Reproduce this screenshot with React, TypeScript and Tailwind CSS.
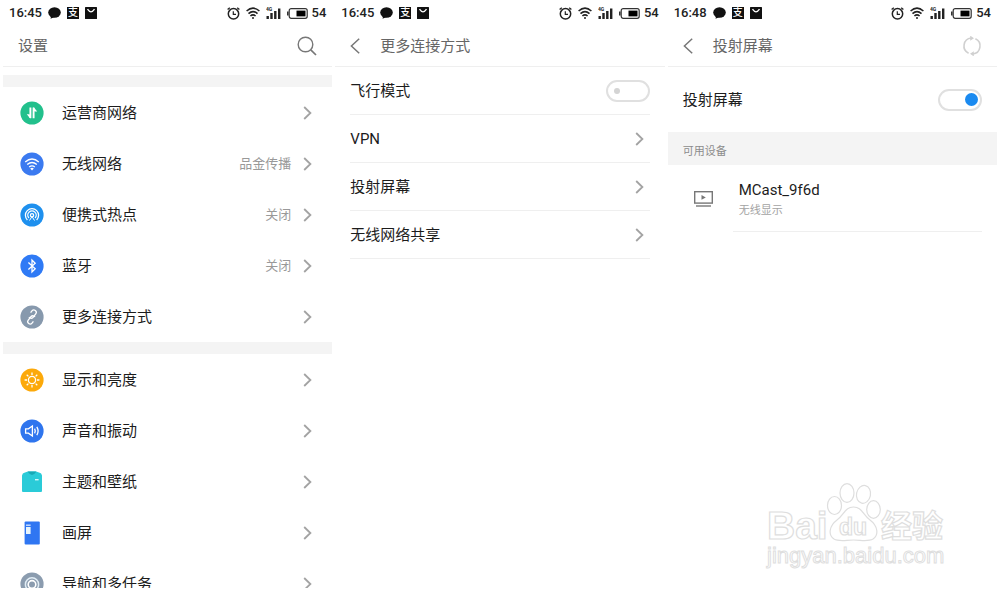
import { useState, type ReactNode } from "react";

function ChatIcon() {
  return (
    <svg width="13" height="12" viewBox="0 0 13 12" aria-hidden="true">
      <ellipse cx="6.5" cy="5.5" rx="6.3" ry="5.2" fill="#111" />
      <path d="M3 9 L2.6 11.8 L6.5 10 Z" fill="#111" />
    </svg>
  );
}

function BagIcon() {
  return (
    <svg width="12" height="12" viewBox="0 0 12 12" aria-hidden="true">
      <rect width="12" height="12" rx="0.5" fill="#111" />
      <path d="M2.5 2.2 Q6 7.4 9.5 2.2" fill="none" stroke="#fff" strokeWidth="1.3" />
    </svg>
  );
}

function AlarmIcon() {
  return (
    <svg width="13" height="13" viewBox="0 0 13 13" fill="none" stroke="#222" aria-hidden="true">
      <circle cx="6.5" cy="6.8" r="5.2" strokeWidth="1.5" />
      <path d="M6.3 4.2 V7.4 H9" strokeWidth="1.2" />
      <path d="M0.6 2.6 L2.8 0.7 M12.4 2.6 L10.2 0.7" strokeWidth="1.3" />
    </svg>
  );
}

function StatusWifiIcon() {
  return (
    <svg width="14" height="12" viewBox="0 0 14 12" fill="none" stroke="#222" strokeWidth="1.6" aria-hidden="true">
      <path d="M0.6 4 Q7 -1.6 13.4 4" />
      <path d="M2.5 6.6 Q7 2.6 11.5 6.6" />
      <path d="M4.4 9 Q7 6.8 9.6 9" />
      <circle cx="7" cy="10.9" r="1" fill="#222" stroke="none" />
    </svg>
  );
}

function SignalIcon() {
  return (
    <svg width="15" height="12" viewBox="0 0 15 12" fill="#222" aria-hidden="true">
      <text x="0" y="4" fontSize="5" fontWeight="700" fontFamily="Roboto, sans-serif">
        4G
      </text>
      <rect x="0.5" y="9" width="2.4" height="3" />
      <rect x="4.3" y="6" width="2.4" height="6" />
      <rect x="8.1" y="4" width="2.4" height="8" />
      <rect x="12" y="1.5" width="2.4" height="10.5" />
    </svg>
  );
}

function BatteryIcon() {
  return (
    <svg width="21" height="11" viewBox="0 0 21 11" aria-hidden="true">
      <rect x="2.2" y="0.7" width="18" height="9.6" rx="2" fill="none" stroke="#333" strokeWidth="1.2" />
      <rect x="0" y="3.5" width="1.6" height="4" fill="#333" />
      <rect x="9.5" y="2.6" width="9" height="5.8" fill="#000" />
    </svg>
  );
}

function Chevron() {
  return (
    <svg className="shrink-0" width="9" height="14" viewBox="0 0 9 14" fill="none" stroke="#a3a3a3" strokeWidth="1.8" aria-hidden="true">
      <path d="M1.2 1 L7.4 7 L1.2 13" />
    </svg>
  );
}

function SearchIcon() {
  return (
    <svg width="20" height="20" viewBox="0 0 20 20" fill="none" stroke="#777" strokeWidth="1.4" aria-hidden="true">
      <circle cx="8.5" cy="8.5" r="7.3" />
      <path d="M13.8 13.8 L19 19" strokeWidth="1.7" />
    </svg>
  );
}

function BackIcon() {
  return (
    <svg width="10" height="16" viewBox="0 0 10 16" fill="none" stroke="#777" strokeWidth="1.5" aria-hidden="true">
      <path d="M9.2 0.7 L1.4 8 L9.2 15.3" />
    </svg>
  );
}

function RefreshIcon() {
  return (
    <svg width="20" height="20" viewBox="0 0 20 20" fill="none" stroke="#d0d0d0" strokeWidth="1.6" aria-hidden="true">
      <path d="M6.6 17.2 A8 8 0 0 1 9.2 2" />
      <path d="M13.4 2.8 A8 8 0 0 1 10.8 18" />
      <path d="M8.2 -0.4 L12 2.2 L8.2 4.8 Z M11.8 15.200 L8 17.800 L11.800 20.400 Z" fill="#d0d0d0" stroke="none" />
    </svg>
  );
}

function CastIcon() {
  return (
    <svg width="19" height="16" viewBox="0 0 19 16" fill="none" stroke="#777" strokeWidth="1.4" aria-hidden="true">
      <rect x="0.7" y="0.7" width="17.6" height="11.4" />
      <path d="M7.5 4 L11.8 6.4 L7.5 8.8 Z" fill="#777" stroke="none" />
      <path d="M2 15 H17" />
    </svg>
  );
}

function Disc({ fill, children }: { fill: string; children: ReactNode }) {
  return (
    <svg width="24" height="24" viewBox="0 0 24 24" fill="none" stroke="#fff" strokeWidth="1.3" aria-hidden="true">
      <circle cx="12" cy="12" r="11.6" fill={fill} stroke="none" />
      {children}
    </svg>
  );
}

const icons = {
  network: (
    <Disc fill="#22c08c">
      <path d="M10.4 6.5 V17 M13.6 17.2 V6.8" strokeWidth="1.9" />
      <path d="M11.3 17.2 H10 L6.8 13.2 H9.6 Z M12.7 6.6 H14 L17.2 10.6 H14.4 Z" fill="#fff" stroke="none" />
    </Disc>
  ),
  wifi: (
    <Disc fill="#3b7af0">
      <path d="M5.2 10 Q12 4 18.8 10" />
      <path d="M7.2 12.6 Q12 8.4 16.8 12.6" />
      <path d="M9.2 15 Q12 12.6 14.8 15" />
      <path d="M10.2 16.4 Q12 15 13.8 16.4 L12 18.4 Z" fill="#fff" stroke="none" />
    </Disc>
  ),
  hotspot: (
    <Disc fill="#1e90ee">
      <path d="M7.4 17 A6.6 6.6 0 1 1 16.6 17" />
      <path d="M8.9 15 A4.2 4.2 0 1 1 15.1 15" />
      <circle cx="12" cy="12.2" r="1.6" />
      <path d="M12 13.5 L9.5 17.5 M12 13.5 L14.5 17.5" strokeWidth="1" />
    </Disc>
  ),
  bluetooth: (
    <Disc fill="#2f7af5">
      <path d="M8.4 8.6 L15.2 14.8 L12 18 V6 L15.2 9.2 L8.4 15.4" />
    </Disc>
  ),
  more: (
    <Disc fill="#8799ad">
      <g transform="rotate(-52 12 12)">
        <path d="M13.6 9.6 H15.8 A2.4 2.4 0 0 1 15.8 14.4 H11.2 A2.4 2.4 0 0 1 9.2 11" transform="translate(1 -1.4)" />
        <path d="M10.4 14.4 H8.2 A2.4 2.4 0 0 1 8.2 9.6 H12.8 A2.4 2.4 0 0 1 14.8 13" transform="translate(-1 1.4)" />
      </g>
    </Disc>
  ),
  display: (
    <Disc fill="#fca90a">
      <circle cx="12" cy="12" r="3.6" />
      <path d="M12 4.6 V7 M12 17 V19.4 M4.6 12 H7 M17 12 H19.4 M6.7 6.7 L8.4 8.4 M15.6 15.6 L17.3 17.3 M6.7 17.3 L8.4 15.6 M15.6 8.4 L17.3 6.7" />
    </Disc>
  ),
  sound: (
    <Disc fill="#2f75ee">
      <path d="M5.6 9.8 H8.4 L12.4 7 V17 L8.4 14.2 H5.6 Z" />
      <path d="M14.6 9.6 Q16 12 14.6 14.4 M16.8 7.8 Q19.4 12 16.8 16.2" />
    </Disc>
  ),
  theme: (
    <svg width="24" height="24" viewBox="0 0 24 24" aria-hidden="true">
      <path d="M2 5.5 Q2.2 3 5 2.4 L8 1.6 H16 L19 2.4 Q21.8 3 22 5.5 V21 Q22 22 21 22 H3 Q2 22 2 21 Z" fill="#2acbd8" />
      <path d="M7.6 1.6 H16.4 Q12 8.4 7.6 1.6 Z" fill="#16a9b6" />
      <rect x="15" y="9" width="3.6" height="1.4" fill="#d5f8fa" />
    </svg>
  ),
  screen: (
    <svg width="24" height="24" viewBox="0 0 24 24" aria-hidden="true">
      <rect x="4.6" y="0.6" width="15.2" height="22.8" rx="1" fill="#2f76f2" />
      <path d="M6 4.2 H10.6" stroke="#cfe0ff" strokeWidth="1.4" />
      <rect x="6" y="6" width="4.6" height="7" fill="#e8f4fb" />
    </svg>
  ),
  navigation: (
    <Disc fill="#8b9caf">
      <circle cx="12" cy="12.4" r="6.6" stroke="#e1edf5" strokeWidth="1.5" />
      <circle cx="12" cy="12.4" r="3.8" stroke="#fff" strokeWidth="1.6" />
    </Disc>
  ),
};

type Item = { label: string; icon: keyof typeof icons; value?: string };

const connections: Item[] = [
  { label: "运营商网络", icon: "network" },
  { label: "无线网络", icon: "wifi", value: "品金传播" },
  { label: "便携式热点", icon: "hotspot", value: "关闭" },
  { label: "蓝牙", icon: "bluetooth", value: "关闭" },
  { label: "更多连接方式", icon: "more" },
];

const device: Item[] = [
  { label: "显示和亮度", icon: "display" },
  { label: "声音和振动", icon: "sound" },
  { label: "主题和壁纸", icon: "theme" },
  { label: "画屏", icon: "screen" },
];

function StatusBar({ time }: { time: string }) {
  return (
    <div className="flex h-[26px] items-center justify-between px-[6px] text-[13px] font-medium text-[#222]">
      <div className="flex items-center gap-[6px]">
        <span>{time}</span>
        <ChatIcon />
        <span className="flex h-3 w-3 items-center justify-center bg-[#111] text-[10px] leading-3 text-white">支</span>
        <BagIcon />
      </div>
      <div className="flex items-center gap-[6px]">
        <AlarmIcon />
        <StatusWifiIcon />
        <SignalIcon />
        <div className="flex items-center gap-1">
          <BatteryIcon />
          <span>54</span>
        </div>
      </div>
    </div>
  );
}

function Header({ title, back, action }: { title: string; back?: boolean; action?: ReactNode }) {
  return (
    <header className="flex h-[41px] items-center border-b border-[#efefef] px-[15px] text-[#666]">
      {back && (
        <button type="button" aria-label="返回" className="mr-5">
          <BackIcon />
        </button>
      )}
      <h1 className="flex-1 text-[15px] leading-5">{title}</h1>
      {action}
    </header>
  );
}

function SettingRow({ item }: { item: Item }) {
  return (
    <li>
      <a href="#" className="flex h-[51px] items-center pr-5 pl-[17px]">
        {icons[item.icon]}
        <span className="ml-[18px] flex-1 text-[15px] leading-5">{item.label}</span>
        {item.value && <span className="mr-3 text-[13px] leading-5 text-[#999]">{item.value}</span>}
        <Chevron />
      </a>
    </li>
  );
}

function Toggle({ id, checked, onChange }: { id: string; checked: boolean; onChange: (v: boolean) => void }) {
  return (
    <input
      id={id}
      type="checkbox"
      role="switch"
      checked={checked}
      onChange={(e) => onChange(e.target.checked)}
      className="flex h-[22px] w-11 appearance-none items-center rounded-full border-2 border-[#e0e0e0] bg-white px-[6px] before:h-[6px] before:w-[6px] before:rounded-full before:bg-[#d4d4d4] checked:justify-end checked:px-[2px] checked:before:h-[13px] checked:before:w-[13px] checked:before:bg-[#1a8af0]"
    />
  );
}

function Watermark() {
  return (
    <svg
      className="pointer-events-none absolute right-[53px] bottom-[19px]"
      width="182"
      height="92"
      viewBox="0 0 182 92"
      fill="#fff"
      stroke="#dedede"
      strokeWidth="1.2"
      fontFamily="'Liberation Sans', 'Noto Sans CJK SC', sans-serif"
    >
      <text x="2" y="59" fontSize="39" fontWeight="700">
        Bai
      </text>
      <ellipse cx="69.5" cy="25.5" rx="7" ry="9" />
      <ellipse cx="82" cy="13" rx="7" ry="9.4" />
      <ellipse cx="98.5" cy="14.4" rx="7" ry="9" transform="rotate(12 98.5 14.4)" />
      <ellipse cx="108.5" cy="29.5" rx="6.8" ry="8.8" />
      <path d="M88.5 27 C97 27 98 35 105 40 C113 46 114 55 108 59 C103 62 96 60 88.5 60 C81 60 74 62 69 59 C63 55 64 46 72 40 C79 35 80 27 88.5 27 Z" />
      <text x="74" y="55" fontSize="23" fontWeight="700">
        du
      </text>
      <text x="116" y="57" fontSize="31" fontWeight="700">
        经验
      </text>
      <text x="2" y="83" fontSize="22" strokeWidth="1">
        jingyan.baidu.com
      </text>
    </svg>
  );
}

export default function App() {
  const [airplane, setAirplane] = useState(false);
  const [casting, setCasting] = useState(true);

  return (
    <main className="relative grid min-h-screen grid-cols-3 gap-[3px] bg-white px-[3px] font-[Roboto,'Noto_Sans_CJK_SC',sans-serif] text-[#1c1c1c]">
      <section>
        <StatusBar time="16:45" />
        <Header
          title="设置"
          action={
            <button type="button" aria-label="搜索">
              <SearchIcon />
            </button>
          }
        />
        <ul className="mt-2 border-t-12 border-[#f4f4f4]">
          {connections.map((item) => (
            <SettingRow key={item.label} item={item} />
          ))}
        </ul>
        <ul className="border-t-12 border-[#f4f4f4]">
          {device.map((item) => (
            <SettingRow key={item.label} item={item} />
          ))}
        </ul>
        {/* last row is cut off by the bottom of the phone screen */}
        <ul className="h-[30px] overflow-hidden">
          <SettingRow item={{ label: "导航和多任务", icon: "navigation" }} />
        </ul>
      </section>

      <section>
        <StatusBar time="16:45" />
        <Header title="更多连接方式" back />
        <div className="px-[15px] text-[15px] leading-5">
          <div className="flex h-12 items-center justify-between border-b border-[#efefef]">
            <label htmlFor="airplane">飞行模式</label>
            <Toggle id="airplane" checked={airplane} onChange={setAirplane} />
          </div>
          {["VPN", "投射屏幕", "无线网络共享"].map((label) => (
            <a key={label} href="#" className="flex h-12 items-center justify-between border-b border-[#efefef] pr-[6px]">
              {label}
              <Chevron />
            </a>
          ))}
        </div>
      </section>

      <section>
        <StatusBar time="16:48" />
        <Header
          title="投射屏幕"
          back
          action={
            <button type="button" aria-label="刷新">
              <RefreshIcon />
            </button>
          }
        />
        <div className="flex h-[65px] items-center justify-between px-[15px] text-[15px] leading-5">
          <label htmlFor="casting">投射屏幕</label>
          <Toggle id="casting" checked={casting} onChange={setCasting} />
        </div>
        <h2 className="bg-[#f4f4f4] px-[15px] pt-3 pb-[5px] text-[11px] leading-4 text-[#8c8c8c]">可用设备</h2>
        <a href="#" className="flex items-center pr-[15px] pl-[26px]">
          <CastIcon />
          <span className="ml-5 flex flex-1 flex-col border-b border-[#efefef] pt-[15px] pb-3 pl-[6px]">
            <span className="text-[15px] leading-5">MCast_9f6d</span>
            <span className="mt-[3px] text-[11px] leading-4 text-[#a3a3a3]">无线显示</span>
          </span>
        </a>
      </section>

      <Watermark />
    </main>
  );
}
